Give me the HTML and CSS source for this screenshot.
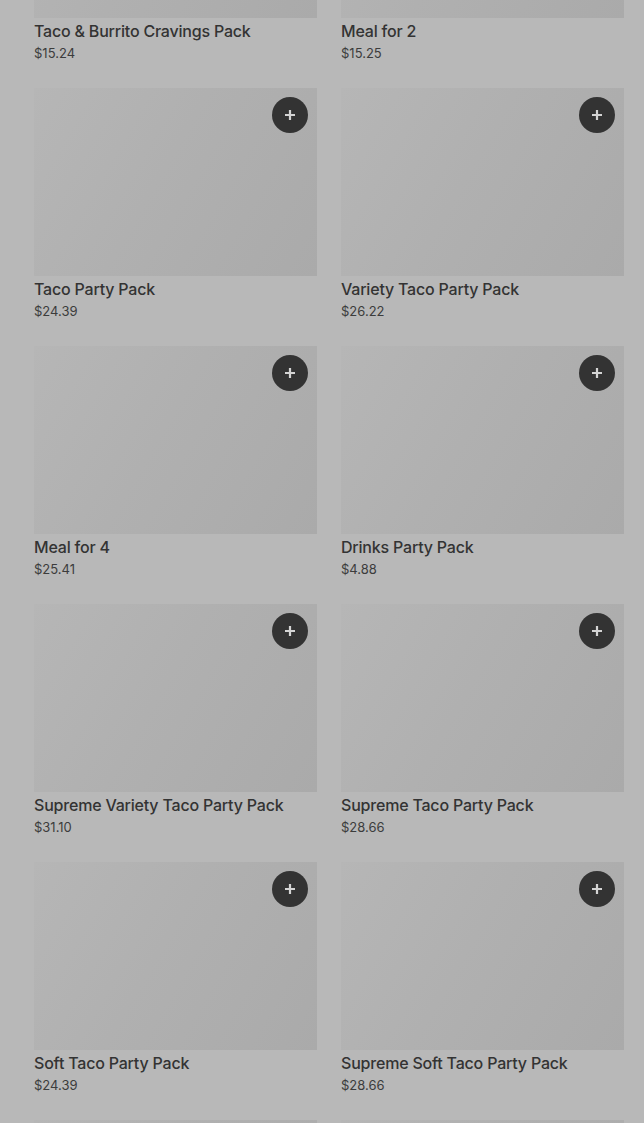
FILE: index.html
```html
<!DOCTYPE html>
<html lang="en">
<head>
    <meta charset="UTF-8">
    <meta name="viewport" content="width=device-width, initial-scale=1.0">
    <title>Party Packs</title>
    <link rel="stylesheet" href="styles.css">
</head>
<body>
    <div class="page">
        <div class="grid">
            <div class="item">
                <div class="thumb"></div>
                <div class="name">Taco &amp; Burrito Cravings Pack</div>
                <div class="price">$15.24</div>
            </div>
            <div class="item">
                <div class="thumb"></div>
                <div class="name">Meal for 2</div>
                <div class="price">$15.25</div>
            </div>
            <div class="item">
                <div class="thumb"><button class="add" aria-label="Add"><svg viewBox="0 0 12 12"><path d="M6 1v10M1 6h10"/></svg></button></div>
                <div class="name">Taco Party Pack</div>
                <div class="price">$24.39</div>
            </div>
            <div class="item">
                <div class="thumb"><button class="add" aria-label="Add"><svg viewBox="0 0 12 12"><path d="M6 1v10M1 6h10"/></svg></button></div>
                <div class="name">Variety Taco Party Pack</div>
                <div class="price">$26.22</div>
            </div>
            <div class="item">
                <div class="thumb"><button class="add" aria-label="Add"><svg viewBox="0 0 12 12"><path d="M6 1v10M1 6h10"/></svg></button></div>
                <div class="name">Meal for 4</div>
                <div class="price">$25.41</div>
            </div>
            <div class="item">
                <div class="thumb"><button class="add" aria-label="Add"><svg viewBox="0 0 12 12"><path d="M6 1v10M1 6h10"/></svg></button></div>
                <div class="name">Drinks Party Pack</div>
                <div class="price">$4.88</div>
            </div>
            <div class="item">
                <div class="thumb"><button class="add" aria-label="Add"><svg viewBox="0 0 12 12"><path d="M6 1v10M1 6h10"/></svg></button></div>
                <div class="name">Supreme Variety Taco Party Pack</div>
                <div class="price">$31.10</div>
            </div>
            <div class="item">
                <div class="thumb"><button class="add" aria-label="Add"><svg viewBox="0 0 12 12"><path d="M6 1v10M1 6h10"/></svg></button></div>
                <div class="name">Supreme Taco Party Pack</div>
                <div class="price">$28.66</div>
            </div>
            <div class="item">
                <div class="thumb"><button class="add" aria-label="Add"><svg viewBox="0 0 12 12"><path d="M6 1v10M1 6h10"/></svg></button></div>
                <div class="name">Soft Taco Party Pack</div>
                <div class="price">$24.39</div>
            </div>
            <div class="item">
                <div class="thumb"><button class="add" aria-label="Add"><svg viewBox="0 0 12 12"><path d="M6 1v10M1 6h10"/></svg></button></div>
                <div class="name">Supreme Soft Taco Party Pack</div>
                <div class="price">$28.66</div>
            </div>
            <div class="item">
                <div class="thumb"></div>
            </div>
            <div class="item">
                <div class="thumb"></div>
            </div>
        </div>
    </div>
</body>
</html>
```

FILE: styles.css
```css
html, body {
    margin: 0;
    height: 1123px;
    overflow: hidden;
    background: #b8b8b8;
}
body {
    font-family: Inter, "Noto Sans", sans-serif;
    color: #333;
}
.page {
    padding: 0 20px 0 34px;
}
/* list is scrolled part way down */
.grid {
    margin-top: -170px;
    display: grid;
    grid-template-columns: 283px 283px;
    column-gap: 24px;
    row-gap: 24px;
}
.thumb {
    position: relative;
    height: 188px;
    background: linear-gradient(120deg, #b6b6b6 0%, #b0b0b0 45%, #aaaaaa 100%);
}
.add {
    position: absolute;
    top: 9px;
    right: 9px;
    width: 36px;
    height: 36px;
    border: none;
    border-radius: 50%;
    background: #333;
    padding: 0;
    display: flex;
    align-items: center;
    justify-content: center;
}
.add svg {
    width: 12px;
    height: 12px;
    stroke: #d4d4d4;
    stroke-width: 2.2;
    fill: none;
}
.name {
    margin-top: 2px;
    font-size: 16px;
    line-height: 22px;
    font-weight: 500;
    letter-spacing: -0.2px;
    color: #333;
}
.price {
    margin-top: 1px;
    font-size: 13px;
    line-height: 21px;
    color: #3c3c3c;
}
```
